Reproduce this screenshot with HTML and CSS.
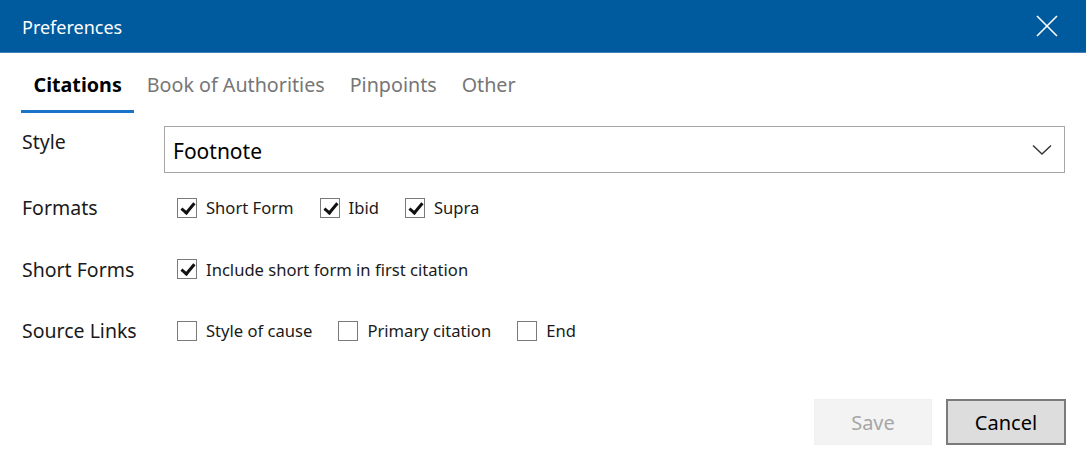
FILE: index.html
```html
<!DOCTYPE html>
<html>
<head>
    <meta charset="utf-8">
    <title>Preferences</title>
    <link rel="stylesheet" href="styles.css">
</head>
<body>
    <div class="dialog">
        <div class="titlebar">
            <span class="titlebar-text">Preferences</span>
            <a class="close">
                <svg width="22" height="22" viewBox="0 0 22 22">
                    <path d="M1 1 L21 21 M21 1 L1 21" stroke="#fff" stroke-width="1.6" fill="none"/>
                </svg>
            </a>
        </div>

        <ul class="tabs">
            <li class="tab active">Citations</li>
            <li class="tab">Book of Authorities</li>
            <li class="tab">Pinpoints</li>
            <li class="tab">Other</li>
        </ul>

        <div class="form">
            <div class="row row-style">
                <label class="row-label">Style</label>
                <div class="select">
                    <span>Footnote</span>
                    <svg width="20" height="12" viewBox="0 0 20 12">
                        <path d="M1 1.5 L10 10 L19 1.5" stroke="#333" stroke-width="1.4" fill="none"/>
                    </svg>
                </div>
            </div>

            <div class="row">
                <label class="row-label">Formats</label>
                <div class="options">
                    <span class="option"><span class="box checked"></span>Short Form</span>
                    <span class="option"><span class="box checked"></span>Ibid</span>
                    <span class="option"><span class="box checked"></span>Supra</span>
                </div>
            </div>

            <div class="row">
                <label class="row-label">Short Forms</label>
                <div class="options">
                    <span class="option"><span class="box checked"></span>Include short form in first citation</span>
                </div>
            </div>

            <div class="row">
                <label class="row-label">Source Links</label>
                <div class="options">
                    <span class="option"><span class="box"></span>Style of cause</span>
                    <span class="option"><span class="box"></span>Primary citation</span>
                    <span class="option"><span class="box"></span>End</span>
                </div>
            </div>
        </div>

        <div class="buttons">
            <button class="btn btn-save" disabled>Save</button>
            <button class="btn btn-cancel">Cancel</button>
        </div>
    </div>
</body>
</html>
```

FILE: styles.css
```css
* {
    box-sizing: border-box;
}

body {
    margin: 0;
    font-family: "Noto Sans", "Open Sans", Arial, sans-serif;
    color: #1a1a1a;
    background: #fff;
}

.dialog {
    width: 1086px;
    height: 469px;
}

.titlebar {
    height: 53px;
    background-color: #005a9e;
    border-bottom: 1px solid #3d7fbf;
    display: flex;
    align-items: center;
    justify-content: space-between;
    padding: 0 28px 0 22px;
    color: #fff;
}

.titlebar-text {
    font-size: 18px;
    margin-top: 1px;
}

.close {
    display: flex;
}

.tabs {
    list-style: none;
    margin: 0;
    padding: 16px 0 0 21px;
    display: flex;
}

.tab {
    font-size: 19.7px;
    color: #767676;
    padding: 2px 12.5px 12px;
    border-bottom: 3px solid transparent;
}

.tab.active {
    color: #000;
    font-weight: 700;
    border-bottom-color: #1a73c9;
}

.form {
    padding: 13px 21px 0 22px;
}

.row {
    display: flex;
    align-items: center;
    height: 61.5px;
}

.row-style {
    height: 50px;
    align-items: flex-start;
    margin-bottom: 1px;
}

.row-label {
    width: 142px;
    font-size: 19.5px;
    color: #1a1a1a;
}

.row-style .row-label {
    padding-top: 2px;
}

.select {
    flex: 1;
    height: 47px;
    border: 1px solid #a6a6a6;
    display: flex;
    align-items: center;
    justify-content: space-between;
    padding: 0 12px 0 8px;
    font-size: 21px;
    color: #000;
}

.select span {
    margin-top: 2px;
}

.options {
    display: flex;
    gap: 26px;
    padding-left: 13px;
}

.option {
    display: flex;
    align-items: center;
    font-size: 16.6px;
    color: #1a1a1a;
}

.box {
    width: 20px;
    height: 20px;
    border: 1px solid #7a7a7a;
    margin-right: 9px;
    position: relative;
    background: #fff;
}

.box.checked::after {
    content: "";
    position: absolute;
    left: 6px;
    top: 1px;
    width: 5px;
    height: 11px;
    border-right: 3px solid #111;
    border-bottom: 3px solid #111;
    transform: rotate(40deg);
}

.buttons {
    display: flex;
    justify-content: flex-end;
    gap: 14px;
    padding: 37.5px 20px 0 0;
}

.btn {
    font-family: inherit;
    font-size: 20px;
    height: 46px;
    width: 118px;
    border: 1px solid transparent;
}

.btn-save {
    background: #f3f3f3;
    color: #a6a6a6;
    border-color: #f0f0f0;
}

.btn-cancel {
    background: #dddddd;
    color: #000;
    border: 2px solid #7a7a7a;
    width: 120px;
}
```
